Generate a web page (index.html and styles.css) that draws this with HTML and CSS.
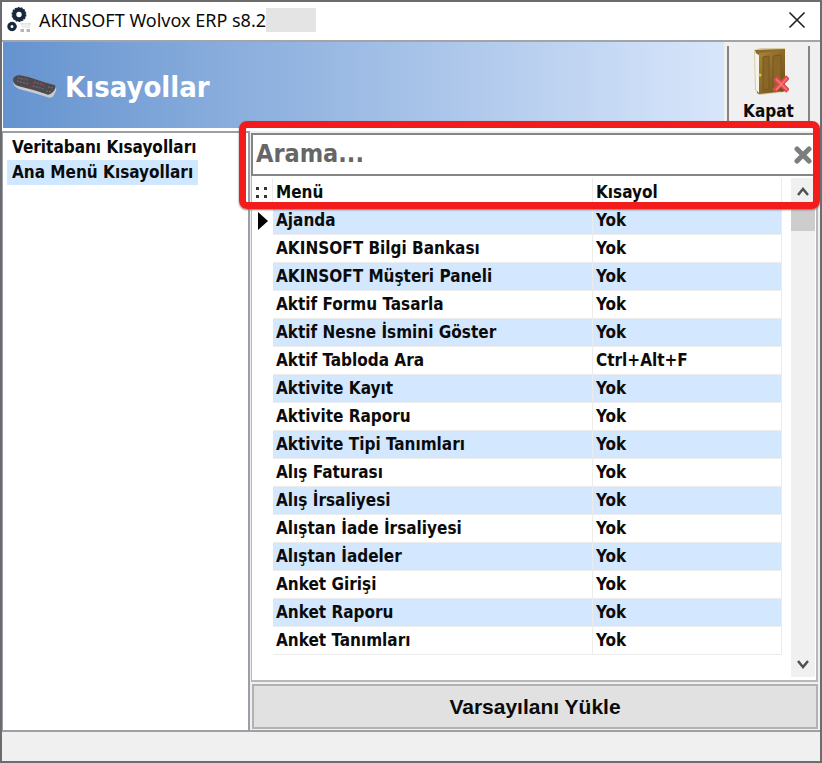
FILE: index.html
```html
<!DOCTYPE html>
<html lang="tr">
<head>
<meta charset="utf-8">
<title>AKINSOFT Wolvox ERP</title>
<link rel="stylesheet" href="styles.css">
</head>
<body>
<div class="window">
  <header class="titlebar">
    <svg class="app-icon" viewBox="0 0 26 26" aria-hidden="true">
      <g fill="none" stroke="#17283c">
        <circle cx="13" cy="7.500" r="4.700" stroke-width="4"/>
        <circle cx="13" cy="7.500" r="6.700" stroke-width="1.500" stroke-dasharray="2 1"/>
        <circle cx="6" cy="19.500" r="3" stroke-width="3"/>
        <circle cx="6" cy="19.500" r="4.300" stroke-width="1" stroke-dasharray="1.500 1"/>
      </g>
      <path d="M14 16h11l-1.500 5h-7z" fill="#d9dddd"/>
      <path d="M15 18h9M16 20h8M18 16v5M21 16v5" stroke="#f7f7f7" stroke-width="1"/>
      <path d="M14.500 22h3.500v3h-3.500zM20.500 22h3.500v3h-3.500z" fill="#b4b7b6"/>
    </svg>
    <span class="app-title">AKINSOFT Wolvox ERP s8.2</span>
    <span class="redacted"></span>
    <button class="window-close" type="button" aria-label="Pencereyi kapat">
      <svg viewBox="0 0 18 18"><path d="M1.500 1.500l15 15M16.500 1.500l-15 15" stroke="#222" stroke-width="1.600" fill="none"/></svg>
    </button>
  </header>

  <div class="banner">
    <div class="banner-main">
      <svg class="keyboard-icon" viewBox="0 0 46 26" aria-hidden="true">
        <path d="M1 8Q1 2 7 1.500L17 3Q31 8 43 11Q46 14 42 21Q40 25 35 23Q19 18 7 15Q1 12 1 8Z" fill="#c9cccf"/>
        <path d="M1 6Q1 2 7 1L17 3Q31 8 43 11Q45 13 41 18Q37 22 34 20Q19 15 6 12Q1 10 1 6Z" fill="#4a4a50"/>
        <path d="M6 4l10 2M5 7l12 3M22 8l10 3M21 12l11 3M36 13l5 1M34 17l5 1" stroke="#65656b" stroke-width="1.500" stroke-dasharray="2 1" fill="none"/>
        <path d="M11 5l2 1M18 12l3 1M20 9l2 1M29 10l2 1" stroke="#9c3040" stroke-width="1.600" fill="none"/>
      </svg>
      <h1 class="banner-title">Kısayollar</h1>
    </div>
    <button class="exit" type="button">
      <svg class="door-icon" viewBox="0 0 40 48" aria-hidden="true">
        <defs><linearGradient id="wood" x1="0" y1="0" x2="1" y2="1"><stop offset="0" stop-color="#a98539"/><stop offset=".5" stop-color="#8b6926"/><stop offset="1" stop-color="#6a4b12"/></linearGradient></defs>
        <path d="M5 2L12 0H36V44L10 47L6 42Z" fill="#d7cbaa"/>
        <path d="M6 2L36 1V43L32 44V4L10 6V46L8 45V7Z" fill="#8d6c2b"/>
        <path d="M6 5L10 7V45L7 42Z" fill="#f6f3e8"/>
        <path d="M10 5L36 2V43L10 46Z" fill="url(#wood)"/>
        <path d="M14 9l6-1v33l-6 1zM24 8l8-1v31l-8 2z" fill="#8a6728" stroke="#785820"/>
        <circle cx="11" cy="27" r="1.500" fill="#d8c344"/>
        <path d="M26 30l13 13M39 29L25 43" stroke="#e4484f" stroke-width="5"/>
        <path d="M27 31l11 11M38 30L27 42" stroke="#f47b7b" stroke-width="1.500"/>
      </svg>
      <span>Kapat</span>
    </button>
    <div class="banner-end"></div>
  </div>

  <main class="content">
    <nav class="sidebar">
      <a class="nav-item" href="#veritabani">Veritabanı Kısayolları</a>
      <a class="nav-item selected" href="#ana-menu">Ana Menü Kısayolları</a>
    </nav>

    <section class="pane">
      <div class="search">
        <input class="search-input" type="text" placeholder="Arama..." aria-label="Arama">
        <button class="search-clear" type="button" aria-label="Temizle">
          <svg viewBox="0 0 18 18"><path d="M3 3l12 12M15 3L3 15" stroke="#7d7d7d" stroke-width="5" stroke-linecap="round" fill="none"/></svg>
        </button>
      </div>

      <div class="list">
        <table class="grid">
          <colgroup><col class="col-mark"><col class="col-menu"><col class="col-key"></colgroup>
          <thead>
            <tr><th class="mark"><svg viewBox="0 0 12 12" class="dots" aria-hidden="true"><path d="M0 0h3v3h-3zM8 0h3v3h-3zM0 8h3v3h-3zM8 8h3v3h-3z" fill="#333"/></svg></th><th>Menü</th><th>Kısayol</th></tr>
          </thead>
          <tbody>
            <tr><td class="mark"><svg viewBox="0 0 10 18" class="pointer" aria-hidden="true"><path d="M0 0l10 9-10 9z" fill="#000"/></svg></td><td>Ajanda</td><td>Yok</td></tr>
            <tr><td class="mark"></td><td>AKINSOFT Bilgi Bankası</td><td>Yok</td></tr>
            <tr><td class="mark"></td><td>AKINSOFT Müşteri Paneli</td><td>Yok</td></tr>
            <tr><td class="mark"></td><td>Aktif Formu Tasarla</td><td>Yok</td></tr>
            <tr><td class="mark"></td><td>Aktif Nesne İsmini Göster</td><td>Yok</td></tr>
            <tr><td class="mark"></td><td>Aktif Tabloda Ara</td><td>Ctrl+Alt+F</td></tr>
            <tr><td class="mark"></td><td>Aktivite Kayıt</td><td>Yok</td></tr>
            <tr><td class="mark"></td><td>Aktivite Raporu</td><td>Yok</td></tr>
            <tr><td class="mark"></td><td>Aktivite Tipi Tanımları</td><td>Yok</td></tr>
            <tr><td class="mark"></td><td>Alış Faturası</td><td>Yok</td></tr>
            <tr><td class="mark"></td><td>Alış İrsaliyesi</td><td>Yok</td></tr>
            <tr><td class="mark"></td><td>Alıştan İade İrsaliyesi</td><td>Yok</td></tr>
            <tr><td class="mark"></td><td>Alıştan İadeler</td><td>Yok</td></tr>
            <tr><td class="mark"></td><td>Anket Girişi</td><td>Yok</td></tr>
            <tr><td class="mark"></td><td>Anket Raporu</td><td>Yok</td></tr>
            <tr><td class="mark"></td><td>Anket Tanımları</td><td>Yok</td></tr>
          </tbody>
        </table>
        <div class="scrollbar">
          <button class="scroll-button" type="button" aria-label="Yukarı"><svg viewBox="0 0 12 10"><path d="M1 8l5-6 5 6" stroke="#505050" stroke-width="2.500" fill="none"/></svg></button>
          <div class="scroll-thumb"></div>
          <button class="scroll-button down" type="button" aria-label="Aşağı"><svg viewBox="0 0 12 10"><path d="M1 2l5 6 5-6" stroke="#505050" stroke-width="2.500" fill="none"/></svg></button>
        </div>
      </div>

      <button class="load-default" type="button">Varsayılanı Yükle</button>
      <div class="highlight"></div>
    </section>
  </main>
  <footer class="statusbar"></footer>
</div>
</body>
</html>
```

FILE: styles.css
```css
* { box-sizing: border-box; }

body {
  margin: 0;
  font-family: "DejaVu Sans Condensed", "Noto Sans", sans-serif;
  font-size: 17px;
  font-weight: 700;
  line-height: 25px;
  color: #0b0b0b;
}

button {
  margin: 0;
  padding: 0;
  border: 0;
  background: none;
  font: inherit;
  color: inherit;
}

svg { display: block; }

.window {
  display: flex;
  flex-direction: column;
  min-height: 100vh;
  border: 2px solid #6c6c6c;
  background: #fff;
}

.titlebar {
  display: flex;
  align-items: center;
  height: 40px;
  padding: 0 14px 2px 4px;
  border-bottom: 2px solid #a2a4a8;
}

.app-icon { width: 26px; height: 26px; margin-right: 7px; }

.app-title {
  font-family: "Noto Sans", "Open Sans", sans-serif;
  font-size: 18px;
  font-weight: 400;
}

.redacted { width: 50px; height: 24px; background: #e4e4e4; }

.window-close { margin-left: auto; }

.window-close svg { width: 18px; height: 18px; }

.banner {
  display: flex;
  height: 86px;
  margin-left: 1px;
  background: #f0f0f0;
}

.banner-main {
  display: flex;
  flex: 1;
  align-items: center;
  gap: 7px;
  padding: 3px 0 0 9px;
  background: linear-gradient(90deg, #6593cf, #d8e6fb);
}

.keyboard-icon { width: 46px; height: 26px; }

.banner-title {
  margin: 0;
  font-family: "DejaVu Sans Condensed", "Noto Sans", sans-serif;
  font-size: 29px;
  line-height: 40px;
  color: #fff;
}

.exit {
  display: flex;
  flex-direction: column;
  align-items: center;
  width: 83px;
  margin: 4px 0 0 3px;
  padding-top: 2px;
  border: solid #858585;
  border-width: 0 2px;
}

.door-icon { width: 40px; height: 48px; margin-bottom: 3px; }

.banner-end { width: 10px; }

.content {
  display: flex;
  flex: 1;
  margin-top: 3px;
  border-bottom: 2px solid #9da0a5;
  background: #f0f0f0;
}

.sidebar {
  display: flex;
  flex-direction: column;
  align-items: flex-start;
  flex: 0 0 248px;
  padding: 2px 4px;
  border: solid #9a9fa7;
  border-width: 2px 2px 0 1px;
  background: #fff;
}

.nav-item {
  padding: 0 5px;
  color: inherit;
  text-decoration: none;
}

.nav-item.selected { background: #cfe8ff; }

.pane {
  position: relative;
  display: flex;
  flex: 1;
  flex-direction: column;
  padding: 2px 2px 1px 1px;
}

.search {
  display: flex;
  align-items: center;
  height: 43px;
  padding-right: 4px;
  border: 2px solid #858585;
  background: #fff;
}

.search-input {
  flex: 1;
  min-width: 0;
  padding: 0 0 2px 3px;
  border: 0;
  outline: 0;
  background: none;
  font: inherit;
  font-size: 25px;
  line-height: 36px;
}

.search-input::placeholder { color: #666; opacity: 1; }

.search-clear svg { width: 18px; height: 18px; }

.list {
  display: flex;
  flex: 1;
  gap: 9px;
  padding: 2px 1px 3px 0;
  border: solid #b6b8bd;
  border-width: 0 2px 2px 1px;
  background: #fff;
}

.grid {
  flex: 1;
  align-self: flex-start;
  table-layout: fixed;
  border-spacing: 0;
}

.col-mark { width: 21px; }
.col-menu { width: 320px; }

.grid th,
.grid td {
  height: 28px;
  padding: 0 3px;
  border-right: 1px solid #ececec;
  text-align: left;
  white-space: nowrap;
}

.grid th { height: 29px; }

.grid td { border-bottom: 1px solid #ececec; }

.grid tbody tr:nth-child(odd) { background: #d3e8ff; }

.grid .mark { padding: 0 0 0 4px; border-bottom: 0; background: #fff; }

.grid td.mark { padding-left: 6px; border-right: 0; }

.dots { width: 12px; height: 12px; }

.pointer { width: 10px; height: 18px; }

.scrollbar {
  display: flex;
  flex: 0 0 24px;
  flex-direction: column;
  background: #f0f0f0;
}

.scroll-button {
  display: flex;
  align-items: center;
  justify-content: center;
  height: 27px;
}

.scroll-button svg { width: 12px; height: 10px; }

.scroll-button.down { margin-top: auto; }

.scroll-thumb { height: 26px; background: #cdcdcd; }

.load-default {
  height: 45px;
  margin: 2px 0 0 1px;
  border: 2px solid #b2b2b2;
  background: #e1e1e1;
  font-family: "Liberation Sans", Arial, sans-serif;
  font-size: 21px;
}

.highlight {
  position: absolute;
  inset: -10px 0 auto -11px;
  height: 88px;
  border: 7px solid #f21c1c;
  border-radius: 8px;
  box-shadow: 0 1px 2px #777;
  pointer-events: none;
}

.statusbar { height: 29px; background: #f0f0f0; }
```
